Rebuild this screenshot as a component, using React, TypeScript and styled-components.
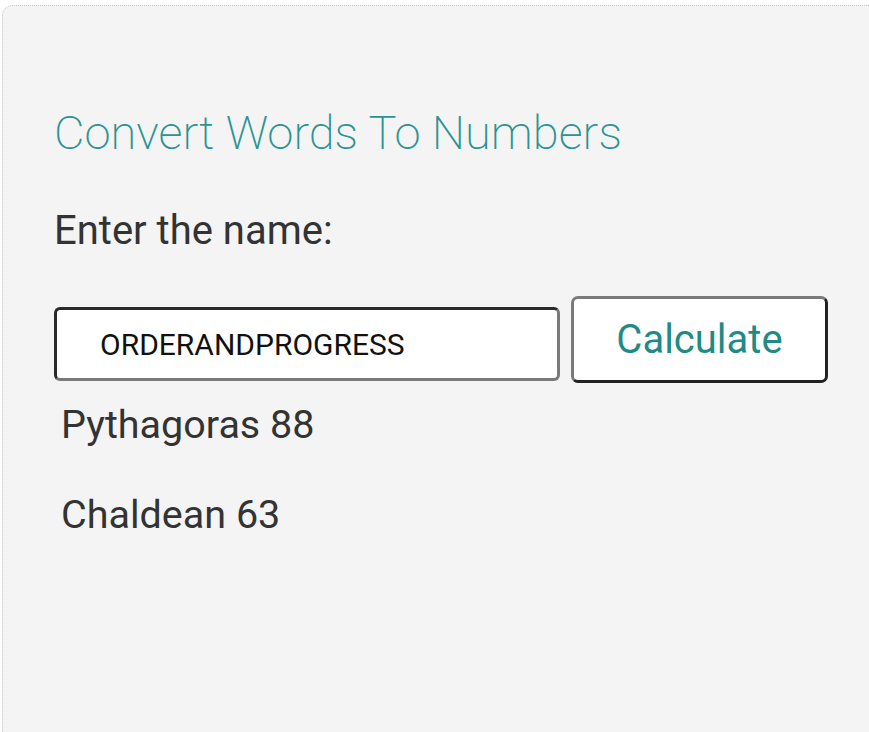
import React from 'react';
import styled, { createGlobalStyle } from 'styled-components';

const GlobalStyle = createGlobalStyle`
  html, body {
    margin: 0;
    padding: 0;
    background: #ffffff;
    overflow: hidden;
  }
  body {
    font-family: Roboto, "Liberation Sans", sans-serif;
  }
`;

const Panel = styled.div`
  margin: 5px 0 0 2px;
  width: 900px;
  height: 760px;
  box-sizing: border-box;
  background: #f4f4f4;
  border: 1px dotted #c8c8c8;
  border-radius: 10px;
  padding: 99px 0 0 51px;
`;

const Title = styled.h1`
  margin: 0;
  font-family: Roboto, "Liberation Sans", sans-serif;
  font-weight: 200;
  font-size: 47px;
  line-height: 56px;
  color: #2a9494;
`;

const Label = styled.div`
  margin-top: 46px;
  font-size: 40px;
  line-height: 48px;
  color: #333333;
`;

const Row = styled.div`
  display: flex;
  align-items: flex-end;
  gap: 11px;
  margin-top: 41px;
`;

const NameInput = styled.input`
  width: 506px;
  height: 74px;
  box-sizing: border-box;
  margin-bottom: 2px;
  padding: 0 0 0 43px;
  background: #ffffff;
  border: 3px solid;
  border-color: #2a2a2a #7a7a7a #7a7a7a #2a2a2a;
  border-radius: 6px;
  font-family: Roboto, "Liberation Sans", sans-serif;
  font-size: 30px;
  color: #111111;
  outline: none;
`;

const CalcButton = styled.button`
  width: 257px;
  height: 87px;
  box-sizing: border-box;
  background: #ffffff;
  border: 3px solid;
  border-color: #7a7a7a #222222 #222222 #7a7a7a;
  border-radius: 7px;
  font-family: Roboto, "Liberation Sans", sans-serif;
  font-size: 40px;
  color: #1f8a86;
  cursor: pointer;
`;

const Results = styled.div`
  padding-left: 7px;
  margin-top: 18px;
  display: flex;
  flex-direction: column;
  gap: 42px;
`;

const ResultLine = styled.div`
  font-size: 39.5px;
  line-height: 48px;
  color: #333333;
`;

export default function App() {
  return (
    <>
      <GlobalStyle />
      <Panel>
        <Title>Convert Words To Numbers</Title>
        <Label>Enter the name:</Label>
        <Row>
          <NameInput defaultValue="ORDERANDPROGRESS" />
          <CalcButton>Calculate</CalcButton>
        </Row>
        <Results>
          <ResultLine>Pythagoras 88</ResultLine>
          <ResultLine>Chaldean 63</ResultLine>
        </Results>
      </Panel>
    </>
  );
}
